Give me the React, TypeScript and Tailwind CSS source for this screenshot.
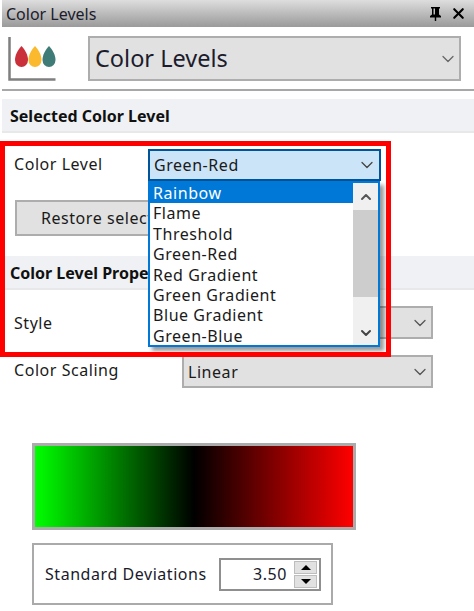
import { ChevronDown, ChevronUp, X } from 'lucide-react';

const font = "font-['Noto_Sans','Open_Sans',sans-serif]";
const levels = ['Flame', 'Threshold', 'Green-Red', 'Red Gradient', 'Green Gradient', 'Blue Gradient', 'Green-Blue'];

function Combo({ value }: { value?: string }) {
    return (
        <div className="w-[251px] h-[33px] flex items-center justify-between pl-[4px] pr-[1px] bg-[#e1e1e1] border-2 border-[#adadad] text-[#1a1a1a]">
            <span>{value}</span>
            <ChevronDown size={20} strokeWidth={1.5} className="text-[#555]" />
        </div>
    );
}

function DropIcon() {
    return (
        <svg width="48" height="46" viewBox="0 0 48 46" className="shrink-0">
            <path d="M1.500 1v42.500h46" fill="none" stroke="#7f7f7f" strokeWidth="2.500" />
            <path d="M13.500 10c3.500 3.500 6.500 9 6.500 14a6.500 7 0 0 1-13 0c0-5 3-10.500 6.500-14z" fill="#c9303a" />
            <path d="M27 10c3.500 3.500 6.500 9 6.500 14a6.500 7 0 0 1-13 0c0-5 3-10.500 6.500-14z" fill="#fbb92e" />
            <path d="M41 10c3.500 3.500 6.500 9 6.500 14a6.500 7 0 0 1-13 0c0-5 3-10.500 6.500-14z" fill="#3f7c78" />
        </svg>
    );
}

export default function App() {
    return (
        <div className={`relative w-[474px] h-[611px] overflow-hidden bg-white text-[16px] tracking-[0.55px] ${font}`}>
            <div className="ml-[2px] h-[27px] flex items-center justify-between pl-[4px] pr-[7px] bg-gradient-to-b from-[#dedede] to-[#9a9a9a] tracking-normal text-[#1c1c2c]">
                <span>Color Levels</span>
                <div className="flex items-center gap-[8px] text-black">
                    <svg width="13" height="15" viewBox="0 0 13 15" fill="currentColor">
                        <path d="M2 1h9v1.500h-1v6l2 1.500v1.500H7.200V15H5.800v-3.500H1V10l2-1.500v-6H2zM4.500 2.500v6h1.500v-6z" />
                    </svg>
                    <X size={17} strokeWidth={3} />
                </div>
            </div>

            <div className="ml-[2px] h-[64px] flex items-start pt-[9px] pl-[6px] border-b-2 border-[#a8a8a8]">
                <DropIcon />
                <div className="ml-[32px] w-[373px] h-[45px] flex items-center justify-between pl-[5px] pr-[1px] bg-[#e1e1e1] border-2 border-[#adadad] text-[23.500px] tracking-normal text-[#1c1c2c]">
                    <span>Color Levels</span>
                    <ChevronDown size={20} strokeWidth={1.5} className="text-[#666]" />
                </div>
            </div>

            <div className="mt-[8px] ml-[2px] h-[34px] flex items-center pl-[8px] pt-[2px] bg-[#f0f1f5] border-b-2 border-[#e8e8ea] text-[16px] font-bold tracking-normal leading-none text-[#111]">
                Selected Color Level
            </div>

            <div className="ml-[14px] mt-[19px] h-[24px] leading-[24px] text-[#1a1a1a]">Color Level</div>

            <div className="ml-[15px] mt-[24px] w-[185px] h-[36px] flex items-center pl-[24px] bg-[#e1e1e1] border-2 border-[#adadad] whitespace-nowrap text-[#1a1a1a]">
                {/* cut where the open list starts */}
                <span className="w-[107px] overflow-hidden">Restore selected</span>
            </div>

            <div className="mt-[20px] ml-[2px] h-[34px] flex items-center pl-[8px] pt-[2px] bg-[#f0f1f5] border-b-2 border-[#e8e8ea] text-[16px] font-bold tracking-normal leading-none whitespace-nowrap text-[#111]">
                <span className="w-[138px] overflow-hidden leading-[20px]">Color Level Properties</span>
            </div>

            <div className="mt-[16px] pl-[14px] flex items-center text-[#1a1a1a]">
                <span className="w-[168px]">Style</span>
                <Combo />
            </div>
            <div className="mt-[16px] pl-[14px] flex items-start text-[#1a1a1a]">
                <span className="w-[168px] leading-[30px]">Color Scaling</span>
                <Combo value="Linear" />
            </div>

            <div className="ml-[32px] mt-[55px] w-[324px] h-[87px] border-[3px] border-[#ababab] bg-linear-to-r/srgb from-[#00ff00] via-[#000000] to-[#ff0000]" />

            <div className="ml-[32px] mt-[13px] w-[301px] h-[62px] flex items-center pl-[11px] border-2 border-[#aaaaaa] text-[#1a1a2a]">
                <span className="w-[174px]">Standard Deviations</span>
                <div className="w-[102px] h-[33px] flex items-center justify-end border-2 border-[#8f8f8f] pr-[2px]">
                    <span className="mr-[7px]">3.50</span>
                    <div className="w-[23px] flex flex-col gap-px">
                        <div className="h-[13px] flex items-center justify-center bg-[#e1e1e1] border border-[#bdbdbd]">
                            <div className="w-0 h-0 border-x-[5px] border-x-transparent border-b-[5px] border-b-black" />
                        </div>
                        <div className="h-[13px] flex items-center justify-center bg-[#e1e1e1] border border-[#bdbdbd]">
                            <div className="w-0 h-0 border-x-[5px] border-x-transparent border-t-[5px] border-t-black" />
                        </div>
                    </div>
                </div>
            </div>

            {/* open dropdown, sits over the rows below */}
            <div className="absolute left-[148px] top-[149px] w-[233px] h-[32px] flex items-center justify-between pl-[4px] pr-[2px] bg-[#cce4f7] border-2 border-[#005499] text-[#1a1a1a]">
                <span>Green-Red</span>
                <ChevronDown size={20} strokeWidth={1.5} className="text-[#444]" />
            </div>
            <div className="absolute left-[148px] top-[181px] w-[232px] h-[166px] flex border-2 border-[#0078d7] bg-white shadow-[4px_4px_4px_rgba(0,0,0,0.4)] leading-[19.4px] text-[#1a1a1a]">
                <div className="flex-1 min-w-0">
                    <div className="pl-[3px] pt-px bg-[#0078d7] text-white">Rainbow</div>
                    {levels.map(l => (
                        <div key={l} className="pl-[3px] pt-px whitespace-nowrap">{l}</div>
                    ))}
                </div>
                <div className="w-[25px] flex flex-col bg-[#f0f0f0]">
                    <div className="h-[27px] flex items-center justify-center">
                        <ChevronUp size={16} strokeWidth={3} className="text-[#555]" />
                    </div>
                    <div className="h-[87px] bg-[#cdcdcd]" />
                    <div className="flex-1 flex items-end justify-center pb-[4px]">
                        <ChevronDown size={16} strokeWidth={3} className="text-[#444]" />
                    </div>
                </div>
            </div>

            {/* red highlight frame from the annotated screenshot */}
            <div className="absolute left-0 top-[141px] w-[391px] h-[216px] border-[5px] border-[#ff0000] pointer-events-none" />
        </div>
    );
}
